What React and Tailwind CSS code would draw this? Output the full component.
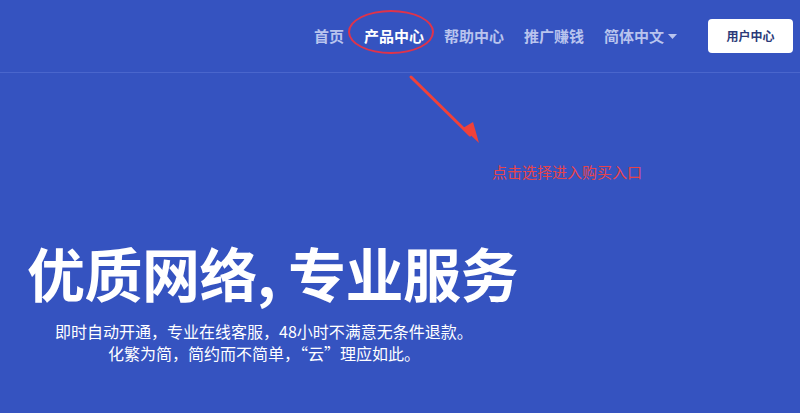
import React from "react";

export default function App() {
  const font = { fontFamily: '"Microsoft YaHei","Noto Sans CJK SC",sans-serif' };
  return (
    <div className="relative w-[800px] h-[413px] overflow-hidden bg-[#3553c0]" style={font}>
      <header className="h-[73px] border-b border-[#4a66cc] flex items-center justify-end pr-[7px]">
        <nav className="flex items-center gap-[20px] text-[15px] font-bold mr-[31px]">
          <span className="text-[#b9c4ee]">首页</span>
          <span className="relative text-white">
            产品中心
            <span className="absolute left-[-16px] top-[-15px] w-[86px] h-[44px] rounded-[50%] border-2 border-[#e0334a]" />
          </span>
          <span className="text-[#b9c4ee]">帮助中心</span>
          <span className="text-[#b9c4ee]">推广赚钱</span>
          <span className="text-[#b9c4ee] flex items-center gap-[4px]">
            简体中文
            <svg width="9" height="5" viewBox="0 0 9 5"><path d="M0 0h9L4.5 5z" fill="#b9c4ee" /></svg>
          </span>
        </nav>
        <button className="w-[85px] h-[34px] rounded-[4px] bg-white text-[#2b3a78] text-[12px] font-bold">用户中心</button>
      </header>
      <svg className="absolute left-0 top-0" width="800" height="413" viewBox="0 0 800 413">
        <line x1="411" y1="77" x2="470" y2="135" stroke="#f0413a" strokeWidth="3" strokeLinecap="round" />
        <path d="M463 128 L479 143 L473 122 Z" fill="#f0413a" />
      </svg>
      <div className="absolute left-[492px] top-[162px] text-[15px] leading-[20px] text-[#e8434a]">点击选择进入购买入口</div>
      <section className="pl-[27px] pt-[165px]">
        <h1 className="text-[58px] leading-[68px] font-bold text-white tracking-[-0.5px]">优质网络, 专业服务</h1>
        <div className="w-[474px] text-center text-white text-[16px] leading-[22px] mt-[14px]">
          <p>即时自动开通，专业在线客服，48小时不满意无条件退款。</p>
          <p>化繁为简，简约而不简单，“云”理应如此。</p>
        </div>
      </section>
    </div>
  );
}
